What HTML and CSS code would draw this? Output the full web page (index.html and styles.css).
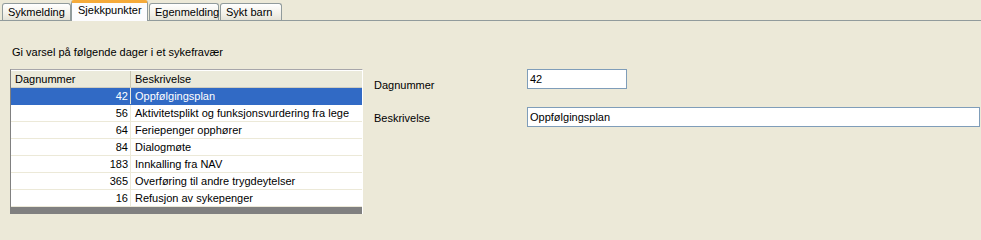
FILE: index.html
```html
<!DOCTYPE html>
<html>
<head>
<meta charset="utf-8">
<link rel="stylesheet" href="styles.css">
</head>
<body>
<div class="tabs">
  <div class="tab t1">Sykmelding</div>
  <div class="tab active t2">Sjekkpunkter</div>
  <div class="tab t3">Egenmelding</div>
  <div class="tab t4">Sykt barn</div>
</div>
<div class="pane">
  <div class="intro">Gi varsel på følgende dager i et sykefravær</div>
  <div class="main">
    <div class="list">
      <div class="head">
        <div class="hc c1">Dagnummer</div>
        <div class="hc c2">Beskrivelse</div>
      </div>
      <div class="row sel"><div class="c1 num">42</div><div class="c2 txt">Oppfølgingsplan</div></div>
      <div class="row"><div class="c1 num">56</div><div class="c2 txt">Aktivitetsplikt og funksjonsvurdering fra lege</div></div>
      <div class="row"><div class="c1 num">64</div><div class="c2 txt">Feriepenger opphører</div></div>
      <div class="row"><div class="c1 num">84</div><div class="c2 txt">Dialogmøte</div></div>
      <div class="row"><div class="c1 num">183</div><div class="c2 txt">Innkalling fra NAV</div></div>
      <div class="row"><div class="c1 num">365</div><div class="c2 txt">Overføring til andre trygdeytelser</div></div>
      <div class="row"><div class="c1 num">16</div><div class="c2 txt">Refusjon av sykepenger</div></div>
      <div class="empty"></div>
    </div>
    <div class="form">
      <div class="frow r1">
        <div class="lbl l1">Dagnummer</div>
        <div class="inp short">42</div>
      </div>
      <div class="frow r2">
        <div class="lbl l2">Beskrivelse</div>
        <div class="inp long">Oppfølgingsplan</div>
      </div>
    </div>
  </div>
</div>
</body>
</html>
```
FILE: styles.css
```css
html, body {
  margin: 0;
  padding: 0;
  background: #ece9d8;
  overflow: hidden;
  height: 214px;
}
body {
  font-family: "Liberation Sans", Arial, sans-serif;
  font-size: 11px;
  color: #000;
}
.tabs {
  display: flex;
  align-items: flex-end;
  height: 20px;
  padding-left: 2px;
  border-bottom: 1px solid #919b9c;
}
.tab {
  box-sizing: border-box;
  height: 17px;
  border: 1px solid #919b9c;
  border-bottom: none;
  border-radius: 3px 3px 0 0;
  background: linear-gradient(#ffffff, #f3f1e9 60%, #e5e3d8);
  padding: 2px 0 0 5px;
  line-height: 13px;
  margin-right: 1px;
  white-space: nowrap;
}
.t1 { width: 69px; }
.t2 { width: 77px; }
.t3 { width: 70px; }
.t4 { width: 62px; }
.tab.active {
  height: 21px;
  margin-bottom: -1px;
  background: #fcfcfe;
  border-top: 3px solid #f5aa3a;
  padding: 1px 0 0 6px;
  margin-right: 1px;
  margin-left: -1px;
  position: relative;
}
.pane {
  padding: 0 0 0 10px;
}
.intro {
  margin-top: 25px;
  line-height: 13px;
  padding-left: 2px;
}
.main {
  display: flex;
  margin-top: 10px;
}
.list {
  box-sizing: border-box;
  width: 353px;
  height: 145px;
  border-top: 1px solid #a7a6aa;
  border-left: 1px solid #808080;
  border-right: 1px solid #ffffff;
  background: #808080;
  display: flex;
  flex-direction: column;
}
.head {
  display: flex;
  height: 18px;
  box-sizing: border-box;
  background: #ebeadb;
  border-bottom: 1px solid #d0cdbf;
  border-top: 1px solid #fff;
}
.hc {
  box-sizing: border-box;
  line-height: 16px;
  padding-left: 4px;
}
.head .c1 { border-right: 1px solid #c7c5b2; }
.c1 { width: 120px; flex: none; }
.c2 { flex: 1; }
.row {
  display: flex;
  height: 17px;
  box-sizing: border-box;
  background: #fff;
  border-bottom: 1px solid #ece9d8;
  line-height: 16px;
  white-space: nowrap;
}
.row .c1 { border-right: 1px solid #ece9d8; box-sizing: border-box; }
.num { text-align: right; padding-right: 2px; }
.txt { padding-left: 4px; }
.row.sel { background: #316ac5; color: #fff; border-bottom-color: #316ac5; }
.empty { flex: 1; }
.form {
  margin-left: 11px;
  flex: 1;
  display: flex;
  flex-direction: column;
}
.frow {
  display: flex;
}
.lbl {
  width: 153px;
  flex: none;
  line-height: 13px;
}
.l1 { padding-top: 10px; }
.l2 { padding-top: 5px; }
.r2 { margin-top: 15px; }
.inp {
  box-sizing: border-box;
  height: 20px;
  border: 1px solid #7f9db9;
  background: #fff;
  padding: 0 0 0 2px;
  line-height: 18px;
}
.short { width: 100px; height: 20px; }
.long { flex: 1; margin-right: 1px; }
```
